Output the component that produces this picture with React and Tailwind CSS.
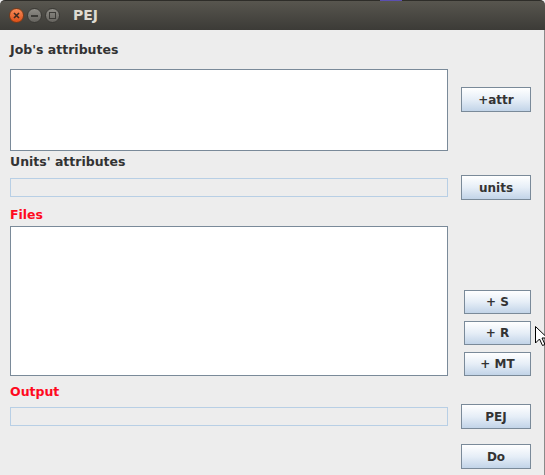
import React from "react";

const font = { fontFamily: '"DejaVu Sans", "Liberation Sans", sans-serif' };

const Btn = ({ children, className = "" }) => (
  <button
    className={`flex items-center justify-center border border-[#7a8a99] bg-gradient-to-b from-[#ffffff] via-[#e6eef7] to-[#c2d4e8] text-[12px] font-bold text-[#333] leading-none ${className}`}
  >
    {children}
  </button>
);

const Label = ({ children, red }) => (
  <div className={`h-4 text-[12.5px] font-bold leading-[19px] ${red ? "text-[#ff0a1e]" : "text-[#333]"}`}>
    {children}
  </div>
);

const Field = () => (
  <div className="mt-[3px] h-[19px] w-[438px] border border-[#b8cfe5] bg-[#ededed]" />
);

const Cursor = () => (
  <svg
    className="absolute left-[535px] top-[326px]"
    width="13"
    height="21"
    viewBox="0 0 13 21"
  >
    <path
      d="M0.5 0.5 L0.5 17 L4.5 13 L7.5 19.5 L10 18.5 L7 12 L12.5 12 Z"
      fill="#fff"
      stroke="#000"
      strokeWidth="1"
      strokeLinejoin="round"
    />
  </svg>
);

export default function App() {
  return (
    <div className="relative h-[475px] w-[545px] overflow-hidden bg-[#ededed]" style={font}>
      {/* title bar */}
      <div className="flex h-[30px] items-center rounded-t-[5px] border-t border-[#2e2d29] bg-gradient-to-b from-[#58564f] to-[#3c3b37] pl-[9px]">
        <div className="flex h-[15px] w-[15px] items-center justify-center rounded-full border border-[#7a3a18] bg-gradient-to-b from-[#f88a56] to-[#dc4f14]">
          <svg width="7" height="7" viewBox="0 0 7 7">
            <path d="M1 1 L6 6 M6 1 L1 6" stroke="#3c2a20" strokeWidth="1.6" />
          </svg>
        </div>
        <div className="ml-[3px] flex h-[15px] w-[15px] items-center justify-center rounded-full border border-[#3a3935] bg-gradient-to-b from-[#8e8c86] to-[#66645f]">
          <div className="h-[2px] w-[7px] bg-[#3c3b37]" />
        </div>
        <div className="ml-[3px] flex h-[15px] w-[15px] items-center justify-center rounded-full border border-[#3a3935] bg-gradient-to-b from-[#8e8c86] to-[#66645f]">
          <div className="h-[7px] w-[7px] border-[1.5px] border-[#3c3b37]" />
        </div>
        <div className="ml-[13px] text-[14px] font-bold text-[#dfdbd2]">PEJ</div>
      </div>

      {/* content */}
      <div className="border-r border-[#8a8a8a] pl-[10px] pt-[10px] h-[445px]">
        <Label>Job's attributes</Label>

        <div className="mt-[13px] flex">
          <div className="h-[82px] w-[438px] border border-[#7a8a99] bg-white" />
          <Btn className="ml-[13px] mt-[18px] h-[25px] w-[70px]">+attr</Btn>
        </div>

        <div className="mt-px">
          <Label>Units' attributes</Label>
        </div>

        <div className="mt-[7px] flex">
          <Field />
          <Btn className="ml-[13px] h-[25px] w-[70px]">units</Btn>
        </div>

        <div className="mt-[5px]">
          <Label red>Files</Label>
        </div>

        <div className="mt-[5px] flex">
          <div className="h-[150px] w-[438px] border border-[#7a8a99] bg-white" />
          <div className="ml-[16px] mt-[64px] flex flex-col gap-[7px]">
            <Btn className="h-[24px] w-[67px]">+ S</Btn>
            <Btn className="h-[24px] w-[67px]">+ R</Btn>
            <Btn className="h-[24px] w-[67px]">+ MT</Btn>
          </div>
        </div>

        <div className="mt-[6px]">
          <Label red>Output</Label>
        </div>

        <div className="mt-[6px] flex">
          <Field />
          <Btn className="ml-[13px] h-[25px] w-[70px]">PEJ</Btn>
        </div>

        <div className="mt-[15px] flex justify-end pr-[13px]">
          <Btn className="h-[25px] w-[70px]">Do</Btn>
        </div>
      </div>

      <div className="absolute left-[380px] top-0 h-px w-[22px] bg-[#5b4fb0]" />
      <Cursor />
    </div>
  );
}
